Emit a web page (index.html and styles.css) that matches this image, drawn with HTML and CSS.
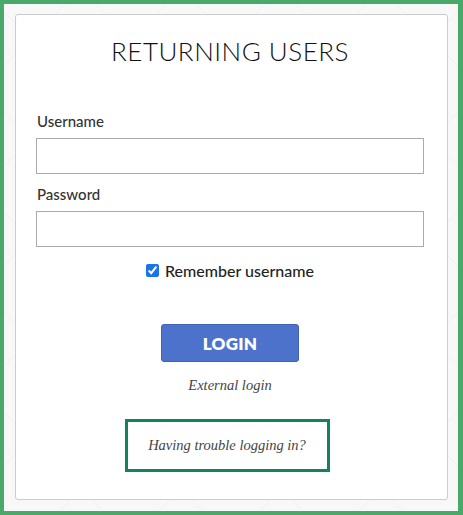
FILE: index.html
```html
<!DOCTYPE html>
<html lang="en">
<head>
    <meta charset="UTF-8">
    <meta name="viewport" content="width=device-width, initial-scale=1.0">
    <title>Returning users</title>
    <link rel="stylesheet" href="styles.css">
</head>
<body>
    <div class="frame">
        <div class="card">
            <h2 class="titulo">RETURNING USERS</h2>
            <form class="login-form">
                <label for="username">Username</label>
                <input type="text" id="username" name="username">
                <label for="password">Password</label>
                <input type="password" id="password" name="password">
                <div class="remember">
                    <input type="checkbox" id="remember" checked>
                    <label for="remember">Remember username</label>
                </div>
                <button type="button" class="btn-login">LOGIN</button>
            </form>
            <a class="link-external" href="#">External login</a>
            <div class="trouble">
                <a href="#">Having trouble logging in?</a>
            </div>
        </div>
    </div>
</body>
</html>
```

FILE: styles.css
```css
html, body {
    margin: 0;
    padding: 0;
}

.frame {
    height: 515px;
    box-sizing: border-box;
    border: 4px solid #4aa86a;
    border-right-width: 5px;
    padding: 10px 10px 11px 11px;
    background-color: #f8f8f8;
    background-image:
        repeating-linear-gradient(45deg, transparent 0, transparent 69.7px, #f0f0f0 69.7px, #f0f0f0 70.7px),
        repeating-linear-gradient(-45deg, transparent 0, transparent 69.7px, #f0f0f0 69.7px, #f0f0f0 70.7px);
}

.card {
    height: 100%;
    box-sizing: border-box;
    background: #fff;
    border: 1px solid #cccccc;
    border-radius: 3px;
    padding: 0 23px 0 20px;
    display: flex;
    flex-direction: column;
    align-items: center;
}

.titulo {
    margin: 20px 0 0 0;
    font-family: "Lato", sans-serif;
    font-weight: 300;
    font-size: 26px;
    color: #111;
    letter-spacing: 0.5px;
}

.login-form {
    width: 100%;
    margin-top: 45px;
    display: flex;
    flex-direction: column;
    align-items: center;
}

.login-form > label {
    align-self: flex-start;
    margin-left: 1px;
    font-family: "Lato", sans-serif;
    font-weight: 500;
    font-size: 15px;
    color: #333;
    line-height: 18px;
}

.login-form > input {
    width: 100%;
    box-sizing: border-box;
    height: 36px;
    border: 1px solid #aaaaaa;
    border-radius: 0;
    margin: 8px 0 11px 0;
}

.remember {
    display: flex;
    align-items: center;
    gap: 6px;
    margin-top: 3px;
    font-family: "Lato", sans-serif;
    font-size: 16px;
    font-weight: 500;
    color: #222;
}

.remember input {
    width: 13px;
    height: 13px;
    margin: 0;
    accent-color: #1a73e8;
}

.btn-login {
    margin-top: 44px;
    width: 138px;
    height: 38px;
    background-color: #4d72cb;
    border: 1px solid #3f61b8;
    border-radius: 3px;
    color: #fff;
    font-family: "Lato", sans-serif;
    font-weight: 800;
    font-size: 17px;
    letter-spacing: 0.3px;
}

.link-external,
.trouble a {
    font-family: "Liberation Serif", serif;
    font-style: italic;
    font-size: 14.5px;
    color: #444;
    text-decoration: none;
}

.link-external {
    margin-top: 15px;
}

.trouble {
    margin: 25px 6px 0 0;
    width: 205px;
    height: 53px;
    box-sizing: border-box;
    border: 3px solid #138262;
    display: flex;
    align-items: center;
    justify-content: center;
}
```
